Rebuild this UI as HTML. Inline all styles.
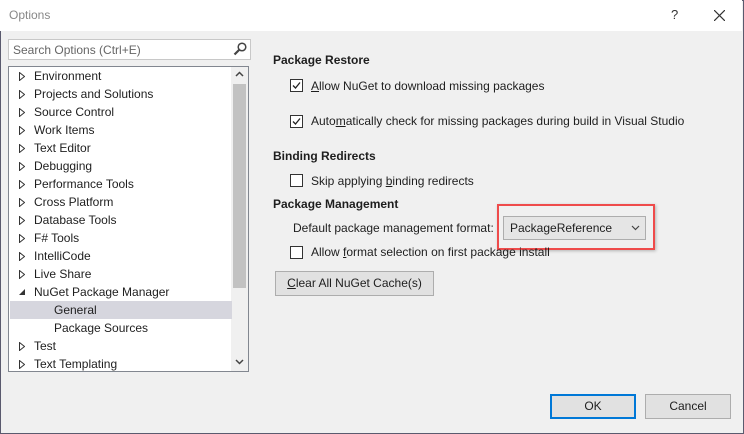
<!DOCTYPE html>
<html><head><style>
*{margin:0;padding:0;box-sizing:border-box}
body{width:744px;height:434px;overflow:hidden;font-family:"Liberation Sans",sans-serif;font-size:12px;color:#1e1e1e;position:relative;background:#f0f0f0}
.a{position:absolute}
.win{left:0;top:0;width:744px;height:434px;border:1px solid #5a5a6e;background:#f0f0f0}
.title{left:0;top:0;width:742px;height:31px;background:#fff}
.row{position:absolute;left:1px;width:222px;height:18px;line-height:18px;white-space:nowrap}
.tri{position:absolute;left:9px;top:5px;width:6px;height:9px;background:no-repeat}
.cb{position:absolute;width:13px;height:13px;border:1px solid #333;background:#fff}
.h{font-weight:bold;font-size:12px}
.btn{border:1px solid #adadad;background:#e1e1e1;text-align:center;line-height:22px}
</style></head><body>
<div class="a win"></div>
<div class="a title"></div>
<div class="a" style="left:9px;top:8px;color:#888;font-size:12px">Options</div>
<div class="a" style="left:671px;top:7px;color:#333;font-size:13px">?</div>
<svg class="a" style="left:714px;top:10px" width="11" height="11"><path d="M0 0L11 11M11 0L0 11" stroke="#333" stroke-width="1.2"/></svg>

<div class="a" style="left:8px;top:39px;width:243px;height:21px;border:1px solid #c8c8c8;background:#fff"></div>
<div class="a" style="left:13px;top:43px;color:#666">Search Options (Ctrl+E)</div>
<svg class="a" style="left:233px;top:42px" width="14" height="14"><circle cx="9" cy="5" r="3.8" fill="none" stroke="#444" stroke-width="1.5"/><path d="M6.5 7.5L1.5 12.5" stroke="#444" stroke-width="2.2"/></svg>

<svg width="0" height="0" style="position:absolute"><defs><symbol id="t" viewBox="0 0 6 9"><path d="M0.5 0.5L5.5 4.5L0.5 8.5Z" fill="#fff" stroke="#333" stroke-width="1"/></symbol></defs></svg>

<div class="a" style="left:8px;top:66px;width:241px;height:306px;border:1px solid #828790;background:#fff">
<div class="a" style="left:222px;top:0;width:17px;height:304px;background:#f0f0f0"></div>
<div class="a" style="left:224px;top:17px;width:13px;height:204px;background:#c2c2c2"></div>
<svg class="a" style="left:226px;top:4px" width="9" height="6"><path d="M1 5L4.5 1.5L8 5" stroke="#444" fill="none" stroke-width="1.5"/></svg>
<svg class="a" style="left:226px;top:292px" width="9" height="6"><path d="M1 1L4.5 4.5L8 1" stroke="#444" fill="none" stroke-width="1.5"/></svg>
<div class="row" style="top:0"><svg class="tri"><use href="#t"/></svg><span style="margin-left:24px">Environment</span></div>
<div class="row" style="top:18px"><svg class="tri"><use href="#t"/></svg><span style="margin-left:24px">Projects and Solutions</span></div>
<div class="row" style="top:36px"><svg class="tri"><use href="#t"/></svg><span style="margin-left:24px">Source Control</span></div>
<div class="row" style="top:54px"><svg class="tri"><use href="#t"/></svg><span style="margin-left:24px">Work Items</span></div>
<div class="row" style="top:72px"><svg class="tri"><use href="#t"/></svg><span style="margin-left:24px">Text Editor</span></div>
<div class="row" style="top:90px"><svg class="tri"><use href="#t"/></svg><span style="margin-left:24px">Debugging</span></div>
<div class="row" style="top:108px"><svg class="tri"><use href="#t"/></svg><span style="margin-left:24px">Performance Tools</span></div>
<div class="row" style="top:126px"><svg class="tri"><use href="#t"/></svg><span style="margin-left:24px">Cross Platform</span></div>
<div class="row" style="top:144px"><svg class="tri"><use href="#t"/></svg><span style="margin-left:24px">Database Tools</span></div>
<div class="row" style="top:162px"><svg class="tri"><use href="#t"/></svg><span style="margin-left:24px">F# Tools</span></div>
<div class="row" style="top:180px"><svg class="tri"><use href="#t"/></svg><span style="margin-left:24px">IntelliCode</span></div>
<div class="row" style="top:198px"><svg class="tri"><use href="#t"/></svg><span style="margin-left:24px">Live Share</span></div>
<div class="row" style="top:216px"><svg class="a" style="left:9px;top:6px" width="7" height="7"><path d="M6 0L6 6L0 6Z" fill="#333"/></svg><span style="margin-left:24px">NuGet Package Manager</span></div>
<div class="row" style="top:234px;background:#d6d6de"><span style="margin-left:44px">General</span></div>
<div class="row" style="top:252px"><span style="margin-left:44px">Package Sources</span></div>
<div class="row" style="top:270px"><svg class="tri"><use href="#t"/></svg><span style="margin-left:24px">Test</span></div>
<div class="row" style="top:288px"><svg class="tri"><use href="#t"/></svg><span style="margin-left:24px">Text Templating</span></div>
</div>

<div class="a h" style="left:273px;top:53px">Package Restore</div>
<div class="cb" style="left:290px;top:79px"></div>
<svg class="a" style="left:291px;top:80px" width="11" height="11"><path d="M2 5.5L4.5 8L9 2.5" stroke="#222" fill="none" stroke-width="1.3"/></svg>
<div class="a" style="left:311px;top:79px"><u>A</u>llow NuGet to download missing packages</div>
<div class="cb" style="left:290px;top:115px"></div>
<svg class="a" style="left:291px;top:116px" width="11" height="11"><path d="M2 5.5L4.5 8L9 2.5" stroke="#222" fill="none" stroke-width="1.3"/></svg>
<div class="a" style="left:311px;top:114px">Auto<u>m</u>atically check for missing packages during build in Visual Studio</div>
<div class="a h" style="left:273px;top:149px">Binding Redirects</div>
<div class="cb" style="left:290px;top:174px"></div>
<div class="a" style="left:311px;top:174px">Skip applying <u>b</u>inding redirects</div>
<div class="a h" style="left:273px;top:197px">Package Management</div>
<div class="a" style="left:293px;top:221px">Default package management format:</div>
<div class="a" style="left:497px;top:204px;width:158px;height:46px;border:2px solid #ef4b4b;box-shadow:1px 1px 3px rgba(0,0,0,.25)"></div>
<div class="a" style="left:503px;top:216px;width:143px;height:24px;border:1px solid #adadad;background:#e5e5e5"></div>
<div class="a" style="left:510px;top:221px">PackageReference</div>
<svg class="a" style="left:631px;top:225px" width="9" height="6"><path d="M1 1L4.5 4.5L8 1" stroke="#444" fill="none" stroke-width="1.2"/></svg>
<div class="cb" style="left:290px;top:246px"></div>
<div class="a" style="left:311px;top:245px">Allow <u>f</u>ormat selection on first package install</div>
<div class="a btn" style="left:275px;top:271px;width:159px;height:25px"><u>C</u>lear All NuGet Cache(s)</div>
<div class="a btn" style="left:550px;top:394px;width:86px;height:25px;border:2px solid #0078d7;line-height:21px">OK</div>
<div class="a btn" style="left:645px;top:394px;width:86px;height:25px">Cancel</div>
</body></html>
